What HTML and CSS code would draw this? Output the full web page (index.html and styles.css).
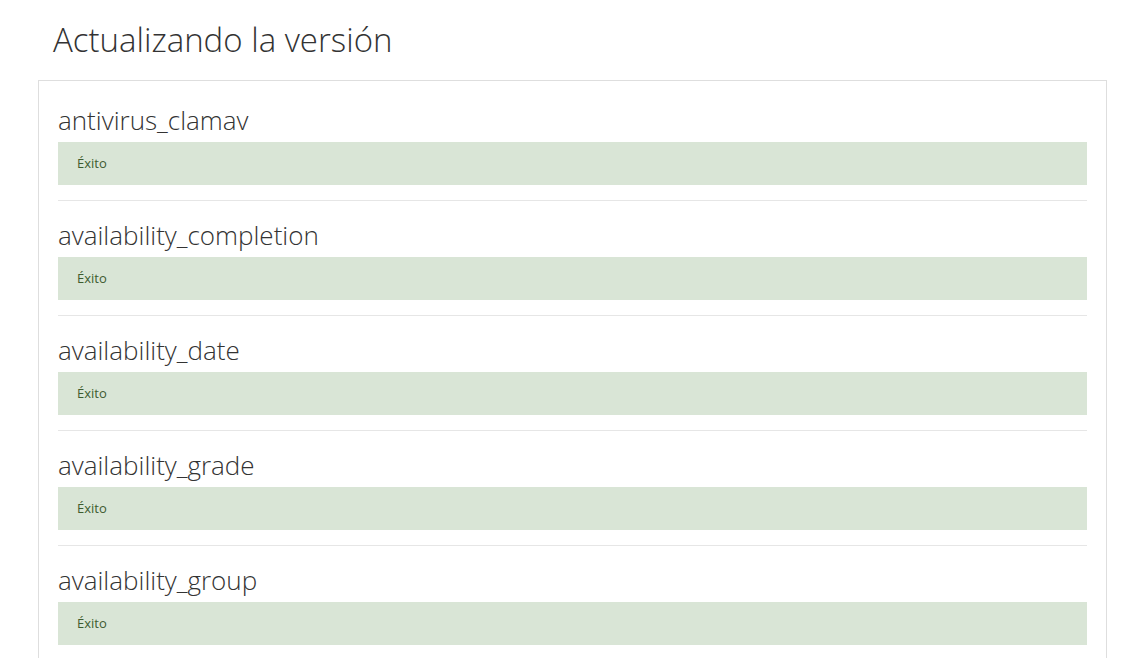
FILE: index.html
```html
<!DOCTYPE html>
<html lang="es">
<head>
<meta charset="utf-8">
<title>Actualizando la versión</title>
<link rel="stylesheet" href="styles.css">
</head>
<body>
<main class="page">
  <h1 class="title">Actualizando la versión</h1>
  <section class="box">
    <div class="item">
      <h2 class="name">antivirus_clamav</h2>
      <div class="status">Éxito</div>
    </div>
    <div class="item">
      <h2 class="name">availability_completion</h2>
      <div class="status">Éxito</div>
    </div>
    <div class="item">
      <h2 class="name">availability_date</h2>
      <div class="status">Éxito</div>
    </div>
    <div class="item">
      <h2 class="name">availability_grade</h2>
      <div class="status">Éxito</div>
    </div>
    <div class="item">
      <h2 class="name">availability_group</h2>
      <div class="status">Éxito</div>
    </div>
  </section>
</main>
</body>
</html>
```

FILE: styles.css
```css
html, body {
  margin: 0;
  padding: 0;
  background: #ffffff;
}
body {
  font-family: "Open Sans", "Noto Sans", sans-serif;
  color: #333333;
  overflow: hidden;
}
.page {
  padding: 0 28px 0 38px;
}
.title {
  margin: 0;
  padding: 18px 0 0 15px;
  height: 80px;
  box-sizing: border-box;
  font-weight: 300;
  font-size: 33px;
  line-height: 44px;
  color: #333333;
}
.box {
  border: 1px solid #dedede;
  padding: 24px 19px 0 19px;
}
.item {
  border-bottom: 1px solid #e6e6e6;
  padding-bottom: 15px;
  margin-bottom: 19px;
}
.name {
  margin: 0 0 7px 0;
  font-weight: 300;
  font-size: 26px;
  line-height: 30px;
  color: #333333;
}
.status {
  background: #d9e5d6;
  color: #3d5c2f;
  font-size: 13px;
  line-height: 43px;
  height: 43px;
  padding-left: 19px;
}
```
